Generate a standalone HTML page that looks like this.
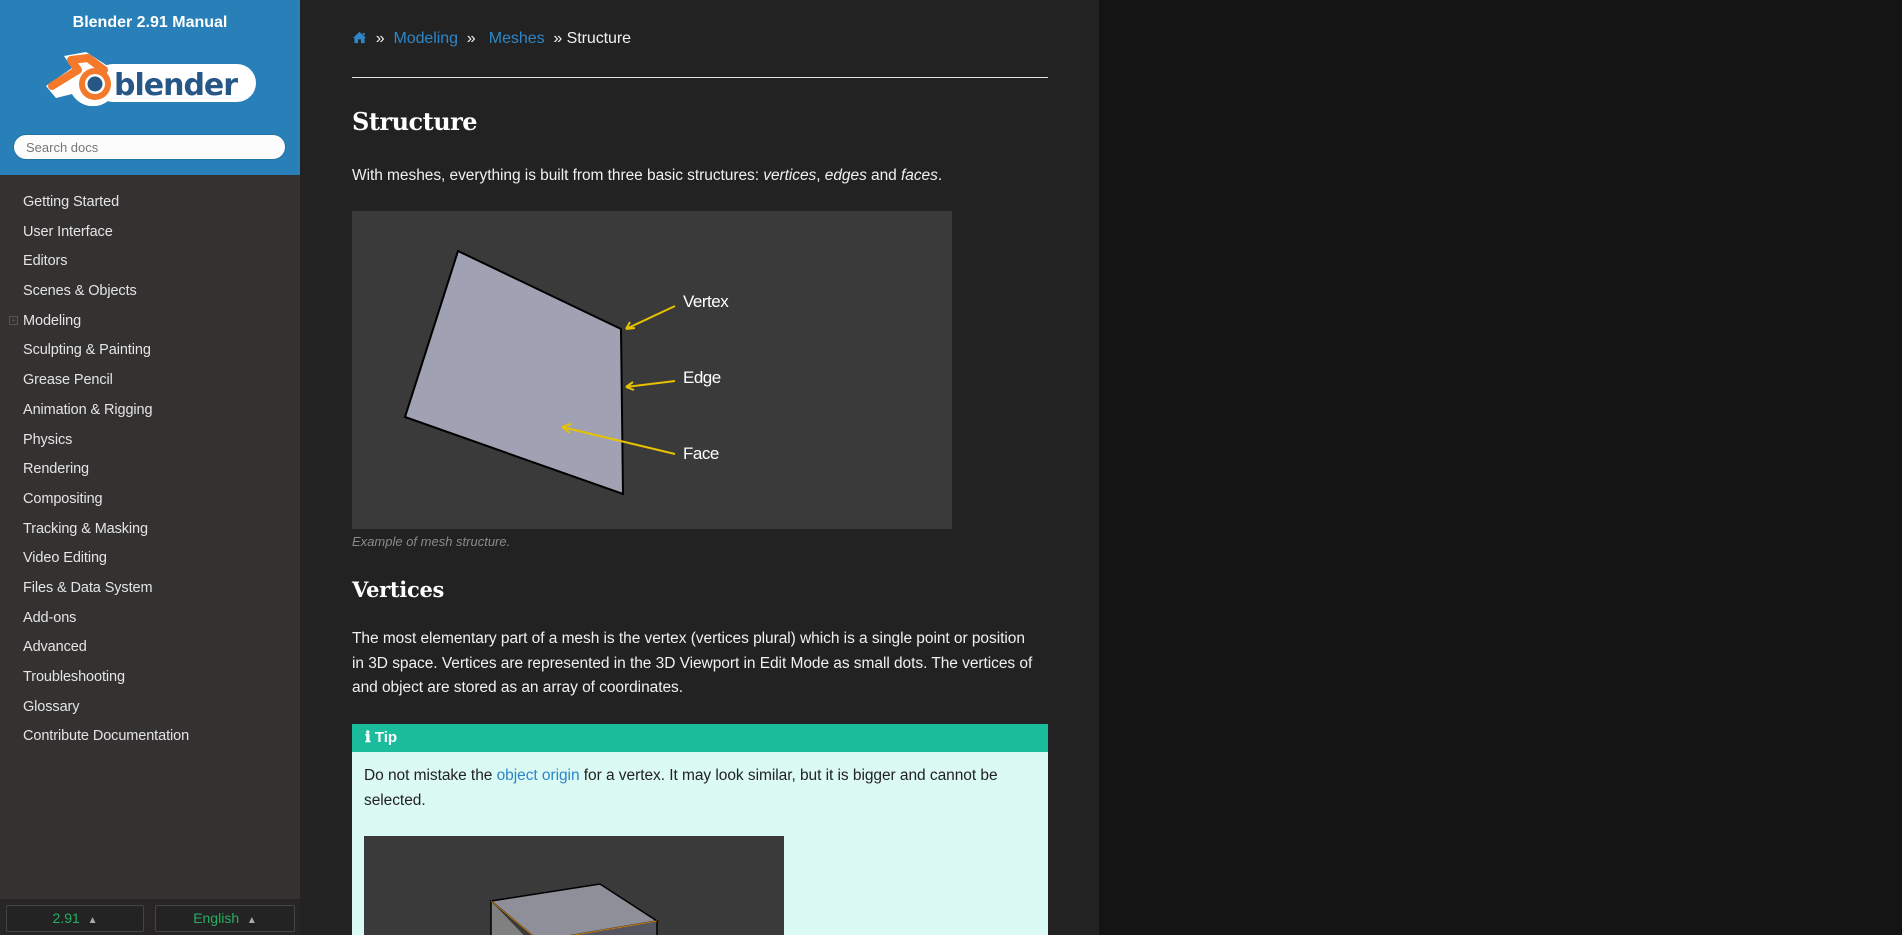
<!DOCTYPE html>
<html><head><meta charset="utf-8">
<style>
*{margin:0;padding:0;box-sizing:border-box}
html,body{width:1902px;height:935px;overflow:hidden;background:#141414;font-family:"Liberation Sans",sans-serif}
#side{position:absolute;left:0;top:0;width:300px;height:935px;background:#343131}
#top{height:175px;background:#2980b9;position:relative}
#top .t{position:absolute;top:14px;width:100%;text-align:center;color:#fff;font-weight:bold;font-size:16px}
#search{position:absolute;left:13px;top:134px;width:273px;height:26px;border-radius:13px;background:#fcfcfc;border:1px solid #2472a4;font-size:13px;color:#777;padding:5px 12px}
#nav{position:absolute;top:191px;left:0;width:300px}
#nav div{height:29.7px;line-height:22px;padding-left:23px;color:#e4e4e4;font-size:14.5px;position:relative;letter-spacing:-0.1px}
#nav .pl{position:absolute;left:9px;top:6px;width:9px;height:9px;border:1px solid #555;font-size:8px;line-height:7px;color:#555;text-align:center}
#bot{position:absolute;top:899px;left:0;width:300px;height:36px;background:#272525}
.bb{position:absolute;top:6px;height:27px;border:1px solid #444;border-radius:2px;background:#232323;color:#27ae60;font-size:14px;text-align:center;line-height:25px}
#main{position:absolute;left:300px;top:0;width:799px;height:935px;background:#222}
.c{position:absolute;left:52px;width:696px;color:#f0f0f0}
a{color:#2e86c8;text-decoration:none}
.p{font-size:15.5px;letter-spacing:-0.05px}
</style></head><body>
<div id="side">
 <div id="top">
  <div class="t">Blender 2.91 Manual</div>
  <svg style="position:absolute;left:44px;top:48px" width="214" height="58" viewBox="0 0 214 58">
   <rect x="50" y="16" width="162" height="38" rx="19" fill="#fff"/>
   <path d="M2 38 L28 20 L20 8 L42 4 L70 22 A22 22 0 1 1 28 46 L12 50 Z" fill="#fff"/>
   <circle cx="51" cy="36" r="20" fill="#fff"/>
   <path d="M8 38 L34 22 L27 12 L44 10 L60 22" stroke="#f5792a" stroke-width="8" fill="none" stroke-linejoin="round" stroke-linecap="round"/>
   <circle cx="51" cy="36" r="16" fill="#f5792a"/>
   <circle cx="51" cy="36" r="10" fill="#fff"/>
   <circle cx="51" cy="36" r="7.5" fill="#265787"/>
   <text x="70" y="47" font-family="DejaVu Sans,sans-serif" font-weight="bold" font-size="30" fill="#265787" letter-spacing="-1">blender</text>
  </svg>
  <div id="search">Search docs</div>
 </div>
 <div id="nav">
  <div>Getting Started</div><div>User Interface</div><div>Editors</div><div>Scenes &amp; Objects</div>
  <div><span class="pl">+</span>Modeling</div><div>Sculpting &amp; Painting</div><div>Grease Pencil</div><div>Animation &amp; Rigging</div>
  <div>Physics</div><div>Rendering</div><div>Compositing</div><div>Tracking &amp; Masking</div><div>Video Editing</div>
  <div>Files &amp; Data System</div><div>Add-ons</div><div>Advanced</div><div>Troubleshooting</div><div>Glossary</div><div>Contribute Documentation</div>
 </div>
 <div id="bot">
  <div class="bb" style="left:6px;width:138px">2.91 &nbsp;<span style="color:#aaa;font-size:10px">▲</span></div>
  <div class="bb" style="left:155px;width:140px">English &nbsp;<span style="color:#aaa;font-size:10px">▲</span></div>
 </div>
</div>
<div id="main">
 <div class="c p" style="top:30px;font-size:16px">
  <svg width="15" height="13" viewBox="0 0 16 14" style="vertical-align:-1px"><path d="M8 1 L1 7.5 L2.5 7.5 L2.5 13 L6.5 13 L6.5 9 L9.5 9 L9.5 13 L13.5 13 L13.5 7.5 L15 7.5 Z M11.5 2 h2 v3.5 l-2 -1.8z" fill="#2e86c8"/></svg>
  &nbsp;» &nbsp;<a>Modeling</a> &nbsp;» &nbsp;&nbsp;<a>Meshes</a> &nbsp;» Structure
 </div>
 <div class="c" style="top:77px;height:1px;background:#e1e4e5"></div>
 <div class="c" style="top:107px;font-family:'DejaVu Serif',serif;font-weight:bold;font-size:24px;color:#fff;letter-spacing:-0.5px">Structure</div>
 <div class="c p" style="top:167px">With meshes, everything is built from three basic structures: <i>vertices</i>, <i>edges</i> and <i>faces</i>.</div>
 <svg class="c" style="top:211px;width:600px;height:318px" viewBox="0 0 600 318">
  <rect width="600" height="318" fill="#3a3a3a"/>
  <polygon points="106,40 269,118 271,283 53,206" fill="#a0a1b2" stroke="#000" stroke-width="2"/>
  <g stroke="#e6c200" stroke-width="2" fill="none">
   <path d="M323 95 L274 118 M274 118 l9 -1 M274 118 l4 -7"/>
   <path d="M323 170 L274 176 M274 176 l8 3 M274 176 l7 -5"/>
   <path d="M323 243 L210 216 M210 216 l8 6 M210 216 l9 -3"/>
  </g>
  <g fill="#fff" font-family="Liberation Sans,sans-serif" font-size="17" letter-spacing="-0.5">
   <text x="331" y="96">Vertex</text><text x="331" y="172">Edge</text><text x="331" y="248">Face</text>
  </g>
 </svg>
 <div class="c" style="top:534px;font-size:13px;font-style:italic;color:#8a8a8a">Example of mesh structure.</div>
 <div class="c" style="top:577px;font-family:'DejaVu Serif',serif;font-weight:bold;font-size:21px;color:#fff;letter-spacing:-0.3px">Vertices</div>
 <div class="c p" style="top:627px;line-height:24.5px;width:682px">The most elementary part of a mesh is the vertex (vertices plural) which is a single point or position in 3D space. Vertices are represented in the 3D Viewport in Edit Mode as small dots. The vertices of and object are stored as an array of coordinates.</div>
 <div class="c" style="top:724px;height:211px;background:#dbfaf4">
  <div style="height:28px;background:#1abc9c;color:#fff;font-weight:bold;font-size:15px;line-height:28px;padding-left:13px">ℹ Tip</div>
  <div class="p" style="padding:11px 12px 0;color:#222;line-height:25px;width:680px">Do not mistake the <a style="color:#2e86c8">object origin</a> for a vertex. It may look similar, but it is bigger and cannot be selected.</div>
  <svg style="position:absolute;left:12px;top:112px" width="420" height="99" viewBox="0 0 420 99">
   <rect width="420" height="99" fill="#3a3a3a"/>
   <polygon points="127,65 175,115 127,115" fill="#808080"/>
   <polygon points="127,65 236,48 293,85 175,105" fill="#8f8f9a" stroke="#000" stroke-width="1.5"/>
   <polygon points="175,105 293,85 293,110 175,110" fill="#55555f"/>
   <path d="M127 65 L127 110 M293 85 L293 110" stroke="#000" stroke-width="1.5"/>
   <path d="M127 65 L175 105 L293 85" stroke="#c07a10" stroke-width="1" fill="none"/>
  </svg>
 </div>
</div>
</body></html>
